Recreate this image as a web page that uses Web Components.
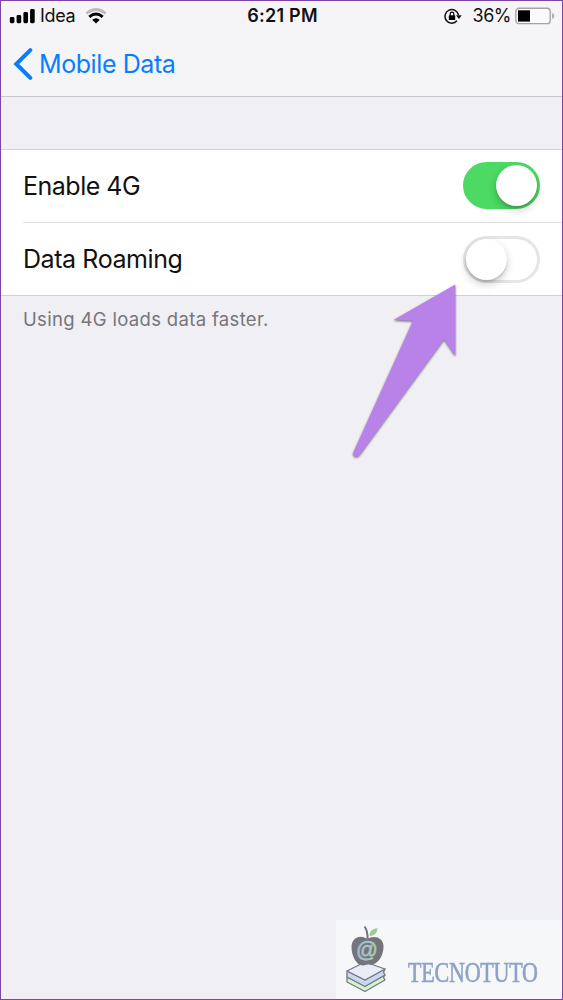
<!DOCTYPE html>
<html lang="en">
<head>
<meta charset="utf-8">
<title>Mobile Data</title>
<style>
html,body{margin:0;height:100%;overflow:hidden}
body{font-family:Inter,"Liberation Sans",sans-serif;color:#111}
</style>
</head>
<body>
<phone-screen>
  <status-bar slot="top"></status-bar>
  <nav-bar slot="top">Mobile Data</nav-bar>
  <settings-group>
    <settings-row style="--ls:-.5px">Enable 4G<toggle-switch slot="control" on></toggle-switch></settings-row>
    <settings-row style="--ls:-.42px" divided>Data Roaming<toggle-switch slot="control"></toggle-switch></settings-row>
    <span slot="note">Using 4G loads data faster.</span>
  </settings-group>
  <pointer-arrow slot="overlay"></pointer-arrow>
  <site-mark slot="overlay">TECNOTUTO</site-mark>
</phone-screen>
<script>
const define = (name, html) => customElements.define(name, class extends HTMLElement {
  constructor() {
    super();
    this.attachShadow({mode: 'open'}).innerHTML = html;
  }
});

define('phone-screen', `<style>
:host{display:flex;flex-direction:column;position:relative;box-sizing:border-box;width:563px;height:1000px;border:1px solid #7c43a8;background:#efeff4;overflow:hidden}
header{height:96px;box-sizing:border-box;background:#f5f5f7;border-bottom:1px solid #c9c9cd}
</style><header><slot name="top"></slot></header><main><slot></slot></main><slot name="overlay"></slot>`);

define('status-bar', `<style>
:host{display:grid;grid-template-columns:1fr auto 1fr;align-items:center;height:30px;font-size:18px;line-height:30px;color:#111}
div{display:flex;align-items:center}
svg{display:block;flex:none}
.l{padding-left:8px}.carrier{margin-left:5px;letter-spacing:-.35px}
.sig{margin-top:-1px}
.wifi{margin-left:10px}
.time{font-weight:600;letter-spacing:.25px;font-size:18px;margin-left:2px}
.r{justify-content:flex-end;padding-right:7px}
.pct{margin:0 4px 0 11px;letter-spacing:-.5px}
</style>
<div class="l"><svg class="sig" width="26" height="16" viewBox="0 0 26 16" fill="#000"><rect x=".8" y="9" width="4.6" height="6.2" rx="1.4"/><rect x="7.6" y="7" width="4.6" height="8.2" rx="1.4"/><rect x="14.4" y="4" width="4.6" height="11.2" rx="1.4"/><rect x="21.1" y="1" width="4.6" height="14.2" rx="1.4"/></svg>
<span class="carrier">Idea</span>
<svg class="wifi" width="22" height="16" viewBox="0 0 22 16"><path d="M1.300 5.500Q11-2.500 20.700 5.500" fill="none" stroke="#bdbdbf" stroke-width="2.700"/><path d="M4.300 8.800Q11 3 17.700 8.800" fill="none" stroke="#000" stroke-width="2.900"/><path d="M7.200 11.800Q11 8.600 14.800 11.800L11 15.400Z" fill="#000"/></svg></div>
<span class="time">6:21 PM</span>
<div class="r"><svg width="18" height="17" viewBox="0 0 18 17"><path d="M14.500 7.100A6.800 6.800 0 1 0 13 12.800" fill="none" stroke="#111" stroke-width="1.5"/><path d="M12 7.200h5.700L15 10.900z" fill="#111"/><rect x="4.800" y="7.200" width="6.400" height="4.900" rx=".5" fill="#000"/><path d="M6.200 7.500V6a1.800 1.800 0 0 1 3.600 0v1.500" fill="none" stroke="#000" stroke-width="1.2"/></svg>
<span class="pct">36%</span>
<svg width="40" height="18" viewBox="0 0 40 18"><rect x=".9" y="1.2" width="34.3" height="15.400" rx="3.2" fill="#fafafa" stroke="#a5a5a7" stroke-width="1.4"/><rect x="3" y="3.3" width="12" height="11.3" fill="#000"/><path d="M37.200 6v6q2.100-1 2.100-3t-2.100-3" fill="#a5a5a7"/></svg></div>`);

define('nav-bar', `<style>
:host{display:flex;align-items:center;height:66px;box-sizing:border-box;padding:0 0 1px 12px;color:#087dff;font-size:25px;line-height:30px;letter-spacing:-.42px}
svg{display:block;margin-right:6px}
</style><svg width="20" height="32" viewBox="0 0 20 32"><path d="M17.3 2.2 3.3 16l14 13.8" fill="none" stroke="#087dff" stroke-width="4" stroke-linecap="round" stroke-linejoin="miter"/></svg><slot></slot>`);

define('settings-group', `<style>
:host{display:block;padding-top:52px}
section{background:#fff;border-top:1px solid #d3d3d8;border-bottom:1px solid #cfcfd4}
p{margin:0;padding:11px 22px;font-size:18.5px;line-height:24px;color:#76767b;letter-spacing:.33px}
</style><section><slot></slot></section><p><slot name="note"></slot></p>`);

define('settings-row', `<style>
:host{display:block;padding-left:22px;font-size:25px;color:#111}
div{display:flex;align-items:center;justify-content:space-between;height:72px;padding-right:22px;letter-spacing:var(--ls)}
:host([divided]) div{border-top:1px solid #dedee1}
</style><div><span><slot></slot></span><slot name="control"></slot></div>`);

define('toggle-switch', `<style>
:host{display:flex;box-sizing:border-box;width:77px;height:47px;border:3px solid #e5e5e5;border-radius:24px;background:#fff;align-items:center}
i{display:block;width:41px;height:41px;border-radius:50%;background:#fff;box-shadow:0 4px 8px #0003,0 2px 2px #0002}
:host([on]){background:#4cd964;border-color:#4cd964;justify-content:flex-end;margin-top:-1px}
</style><i></i>`);

define('pointer-arrow', `<style>
:host{position:absolute;left:339px;top:269px;width:130px;height:200px}
svg{display:block;filter:drop-shadow(0 1px 1px #0008)}
</style><svg width="130" height="200" viewBox="340 270 130 200"><path d="M455.3 284.5 393.5 320l19.5.8L353.3 452.5q-.8 4.3 3 4.3 1.9 0 3.2-1.8L444 339.5l11.3 16.5z" fill="#b982e8"/></svg>`);

define('site-mark', `<style>
:host{position:absolute;right:0;bottom:0;width:226px;height:79px;box-sizing:border-box;background:#f6f7f9;display:flex;align-items:flex-start;padding-left:9px}
svg{display:block;flex:none}
span{font-family:"Liberation Serif",serif;font-size:29px;line-height:30px;color:#8fa1c5;-webkit-text-stroke:.6px #8fa1c5;margin:37px 0 0 21px;transform:scaleX(.76);transform-origin:left;letter-spacing:-.3px}
</style><svg width="42" height="79" viewBox="0 0 42 79">
<g stroke="#747884" stroke-width="1.3" stroke-linejoin="round"><path d="M2 57v5l18 9.500L40 60l-1.500-2.500L40 55 20 66z" fill="#d3f3cb"/><path d="M2 51v6l18 9.500L40 55l-1.500-2.500L40 49 20 60z" fill="#cbd6ef"/><path d="m2 51 18-9 20 7-20 11z" fill="#e8edf7"/></g>
<path d="M22 19C15 14 6.500 18 6.500 27c0 9 5 18.500 11.500 18.500 2 0 3-1 5-1s3 1 5 0c6-2 10.500-9.500 10.500-18 0-9-9-12-16.500-7.500z" fill="#74757b"/><path d="M22.500 20q.5-9-3-13.500" fill="none" stroke="#74757b" stroke-width="2"/><path d="M24.500 16q-.5-7 8-8-.5 8-8 8z" fill="#9fca98"/>
<linearGradient id="at"><stop stop-color="#a5b8e0"/><stop offset="1" stop-color="#a9d0a8"/></linearGradient>
<text x="22" y="36.500" text-anchor="middle" font-family="Liberation Sans,sans-serif" font-size="21.500" fill="url(#at)" stroke="url(#at)" stroke-width=".6">@</text></svg><span><slot></slot></span>`);
</script>
</body>
</html>
